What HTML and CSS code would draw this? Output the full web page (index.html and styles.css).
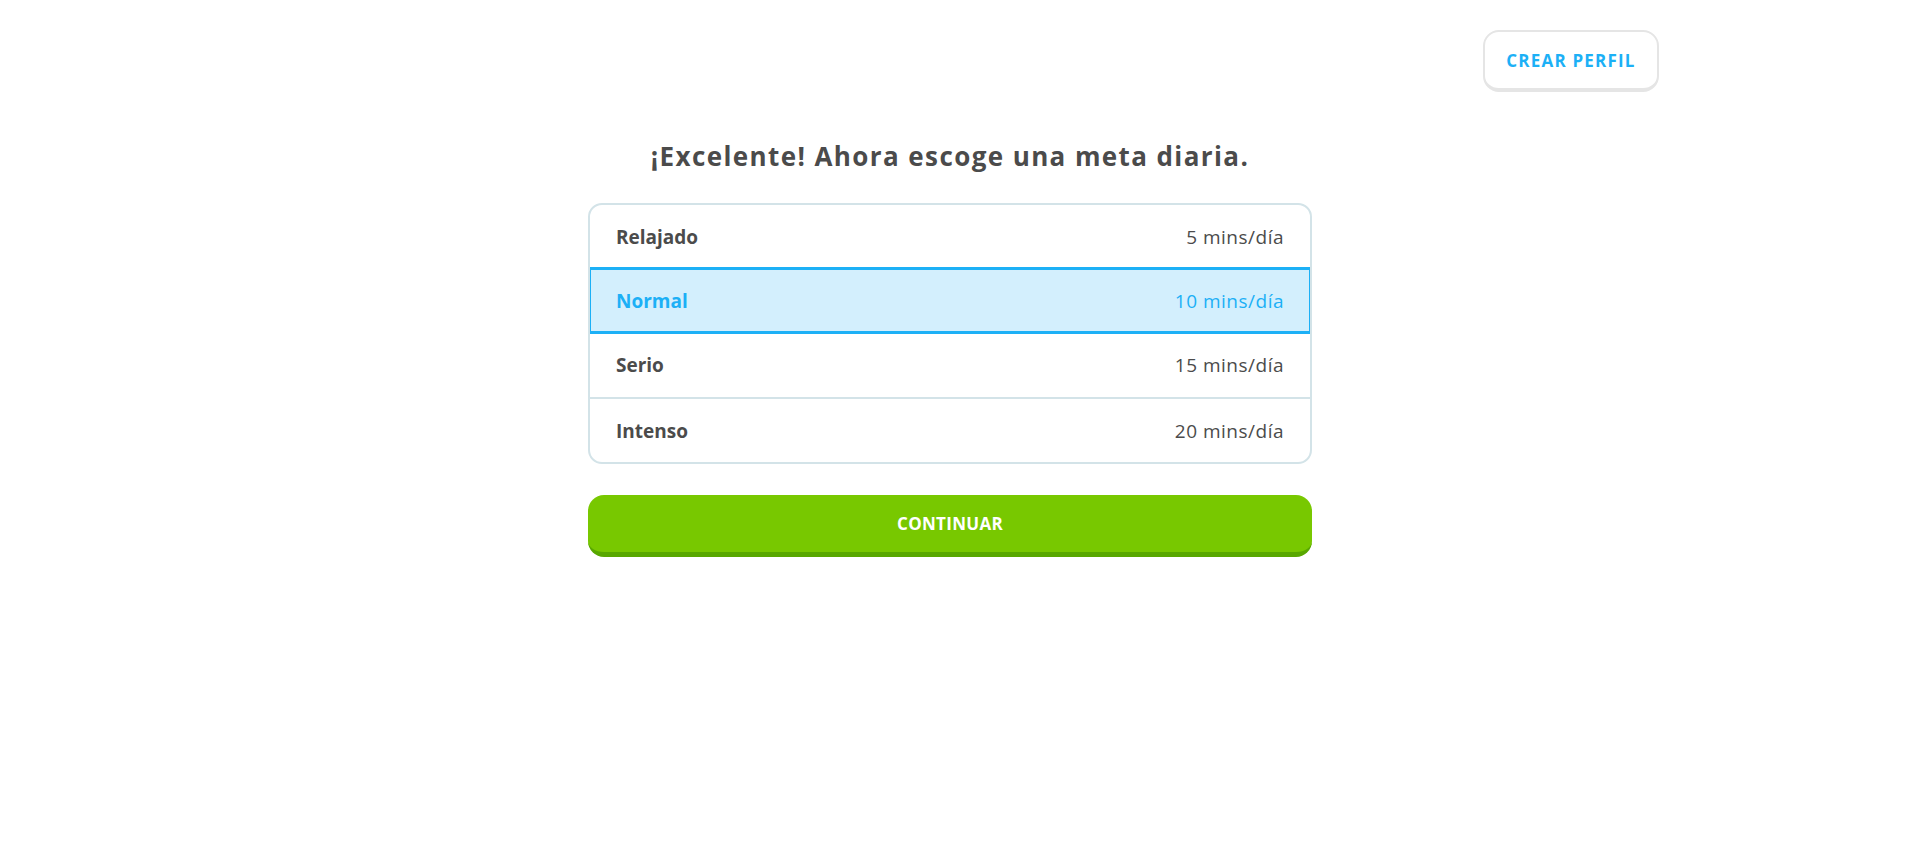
FILE: index.html
```html
<!DOCTYPE html>
<html lang="es">
<head>
<meta charset="utf-8">
<title>Meta diaria</title>
<link rel="stylesheet" href="styles.css">
</head>
<body>
<div class="page">
  <header class="topbar">
    <button class="btn-outline">CREAR PERFIL</button>
  </header>
  <main class="content">
    <h1 class="title">¡Excelente! Ahora escoge una meta diaria.</h1>
    <ul class="goals">
      <li class="goal"><span class="goal-name">Relajado</span><span class="goal-time">5 mins/día</span></li>
      <li class="goal goal-selected"><span class="goal-name">Normal</span><span class="goal-time">10 mins/día</span></li>
      <li class="goal"><span class="goal-name">Serio</span><span class="goal-time">15 mins/día</span></li>
      <li class="goal"><span class="goal-name">Intenso</span><span class="goal-time">20 mins/día</span></li>
    </ul>
    <button class="btn-primary">CONTINUAR</button>
  </main>
</div>
</body>
</html>
```

FILE: styles.css
```css
* { box-sizing: border-box; }
html, body { margin: 0; padding: 0; background: #fff; }
body {
  font-family: "Open Sans", "Noto Sans", sans-serif;
  color: #4b4b4b;
}
.page {
  padding-right: 20px;
}
.topbar {
  display: flex;
  justify-content: flex-end;
  padding: 30px 241px 0 0;
}
.btn-outline {
  width: 176px;
  height: 62px;
  background: #fff;
  border: 2px solid #e5e5e5;
  border-bottom-width: 4px;
  border-radius: 16px;
  color: #1cb0f6;
  font-family: inherit;
  font-weight: 700;
  font-size: 17px;
  letter-spacing: 1.2px;
  cursor: pointer;
  padding: 0;
}
.content {
  width: 724px;
  margin: 0 auto;
  padding-top: 48px;
}
.title {
  margin: 0 0 31px;
  text-align: center;
  font-size: 26px;
  line-height: 32px;
  letter-spacing: 1.4px;
  font-weight: 700;
  color: #4b4b4b;
}
.goals {
  list-style: none;
  margin: 0;
  padding: 0;
  border: 2px solid #d3e3e8;
  border-radius: 14px;
  overflow: hidden;
}
.goal {
  display: flex;
  justify-content: space-between;
  align-items: center;
  height: 65px;
  padding: 0 26px;
  border-top: 2px solid #d3e3e8;
  font-size: 19px;
}
.goal:first-child { border-top: 0; height: 63px; }
.goal-name { font-weight: 700; }
.goal-time { font-weight: 400; letter-spacing: 0.5px; }
.goal-selected {
  background: #d3effd;
  border: 3px solid #1cb0f6;
  margin: -1px -2px;
  height: 67px;
  padding: 0 25px;
  color: #1cb0f6;
  position: relative;
}
.goal-selected + .goal { border-top: 0; height: 64px; }
.btn-primary {
  display: block;
  width: 100%;
  height: 62px;
  margin-top: 31px;
  background: #78c800;
  border: 0;
  border-bottom: 5px solid #58a700;
  border-radius: 16px;
  color: #fff;
  font-family: inherit;
  font-weight: 700;
  font-size: 17px;
  letter-spacing: 0.3px;
  cursor: pointer;
  padding: 0;
}
```
